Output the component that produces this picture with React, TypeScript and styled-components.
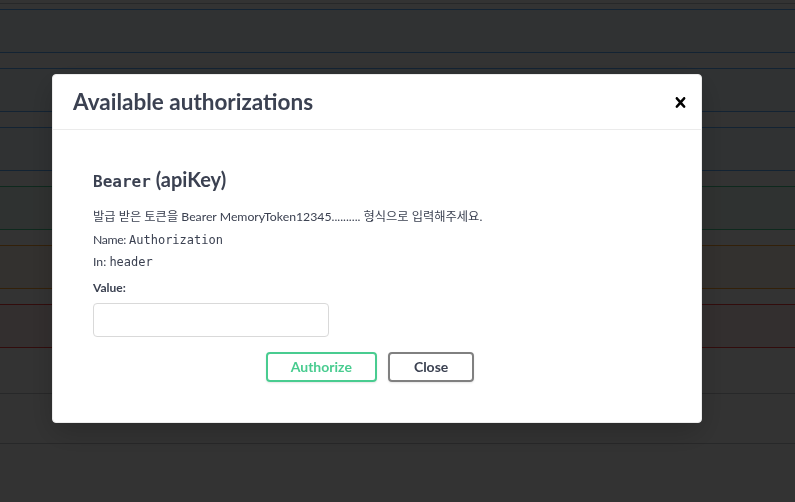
import React from "react";
import styled, { createGlobalStyle } from "styled-components";

const Global = createGlobalStyle`
  html, body { margin: 0; padding: 0; background: #fff; }
  body { font-family: Lato, "Noto Sans CJK KR", sans-serif; color: #3b4151; overflow: hidden; }
  * { box-sizing: border-box; }
`;

const Page = styled.div`
  margin-top: -46px;
  width: 795px;
`;

const TagHeader = styled.div<{ $h: number }>`
  height: ${(p) => p.$h + 1}px;
  border-bottom: 1px solid rgba(59, 65, 81, 0.3);
  margin-bottom: ${(p) => (p.$h > 40 && p.$h < 49.5 ? 5 : p.$h === 49 ? 5 : 0)}px;
`;

const OpList = styled.div`
  display: flex;
  flex-direction: column;
  gap: 15px;
  padding-bottom: 15px;
`;

const methodColors: Record<string, [string, string]> = {
  get: ["#61affe", "rgba(97,175,254,.1)"],
  post: ["#49cc90", "rgba(73,204,144,.1)"],
  put: ["#fca130", "rgba(252,161,48,.1)"],
  delete: ["#f93e3e", "rgba(249,62,62,.1)"],
};

const OpBlock = styled.div<{ $m: string }>`
  height: 44px;
  margin: 0 -6px;
  border: 1px solid ${(p) => methodColors[p.$m][0]};
  background: ${(p) => methodColors[p.$m][1]};
  border-radius: 4px;
`;

const Backdrop = styled.div`
  position: fixed;
  inset: 0;
  background: rgba(0, 0, 0, 0.8);
  display: flex;
  align-items: center;
  justify-content: flex-start;
  padding: 0 0 5px 52px;
`;

const Modal = styled.div`
  width: 650px;
  background: #fff;
  border: 1px solid #ebebeb;
  border-radius: 4px;
  box-shadow: 0 10px 30px 0 rgba(0, 0, 0, 0.2);
`;

const ModalHeader = styled.div`
  display: flex;
  align-items: center;
  justify-content: space-between;
  padding: 12px 10px 12px 20px;
  border-bottom: 1px solid #ebebeb;
`;

const Title = styled.h3`
  margin: 0;
  font-family: Lato, sans-serif;
  font-size: 22.5px;
  line-height: 30px;
  font-weight: 700;
  color: #3b4151;
`;

const CloseIcon = styled.button`
  border: none;
  background: none;
  padding: 0;
  display: flex;
  width: 21px;
  height: 21px;
  svg { fill: #000; }
`;

const ModalBody = styled.div`
  padding: 20px;
`;

const AuthContainer = styled.div`
  padding: 10px 20px;
`;

const SchemeTitle = styled.h4`
  margin: 8px 0 13px;
  font-family: Lato, sans-serif;
  font-size: 20px;
  line-height: 22px;
  font-weight: 700;
  color: #3b4151;
`;

const Code = styled.code<{ $size: number }>`
  font-family: "DejaVu Sans Mono", "Liberation Mono", monospace;
  font-size: ${(p) => p.$size}px;
  font-weight: inherit;
`;

const Para = styled.p<{ $mb: number }>`
  margin: 0 0 ${(p) => p.$mb}px;
  font-family: Lato, "Noto Sans CJK KR", sans-serif;
  font-size: 12.25px;
  line-height: 21px;
  color: #3b4151;
`;

const Key = styled.span`
  letter-spacing: -0.4px;
`;

const Label = styled.label`
  display: block;
  margin-top: 5px;
  font-family: Lato, sans-serif;
  font-size: 12px;
  line-height: 20px;
  font-weight: 700;
  color: #3b4151;
`;

const Input = styled.input`
  display: block;
  margin: 5px 0;
  width: 236px;
  height: 34px;
  padding: 8px 10px;
  border: 1px solid #d9d9d9;
  border-radius: 4px;
  background: #fff;
  font-size: 14px;
  outline: none;
`;

const BtnRow = styled.div`
  display: flex;
  justify-content: center;
  gap: 11px;
  padding: 10px 14px 10px 0;
`;

const Btn = styled.button<{ $variant: "auth" | "close" }>`
  font-family: Lato, sans-serif;
  font-size: 14px;
  font-weight: 700;
  line-height: 16px;
  padding: 5px ${(p) => (p.$variant === "auth" ? 23 : 24)}px;
  border-radius: 4px;
  background: transparent;
  box-shadow: 0 1px 2px rgba(0, 0, 0, 0.1);
  border: 2px solid ${(p) => (p.$variant === "auth" ? "#49cc90" : "#808080")};
  color: ${(p) => (p.$variant === "auth" ? "#49cc90" : "#3b4151")};
`;

const ops = ["get", "get", "get", "post", "put", "delete"];

export default function App() {
  return (
    <>
      <Global />
      <Page>
        <TagHeader $h={49} />
        <OpList>
          {ops.map((m, i) => (
            <OpBlock key={i} $m={m} />
          ))}
        </OpList>
        <TagHeader $h={30} />
        <TagHeader $h={49} />
      </Page>
      <Backdrop>
        <Modal>
          <ModalHeader>
            <Title>Available authorizations</Title>
            <CloseIcon aria-label="Close">
              <svg width="21" height="21" viewBox="0 0 20 20">
                <path d="M14.348 14.849c-.469.469-1.229.469-1.697 0L10 11.819l-2.651 3.029c-.469.469-1.229.469-1.697 0-.469-.469-.469-1.229 0-1.697l2.758-3.15-2.759-3.152c-.469-.469-.469-1.228 0-1.697.469-.469 1.228-.469 1.697 0L10 8.183l2.651-3.031c.469-.469 1.228-.469 1.697 0 .469.469.469 1.229 0 1.697l-2.758 3.152 2.758 3.15c.469.469.469 1.229 0 1.698z" />
              </svg>
            </CloseIcon>
          </ModalHeader>
          <ModalBody>
            <AuthContainer>
              <SchemeTitle>
                <Code $size={16}>Bearer</Code>&nbsp;(apiKey)
              </SchemeTitle>
              <Para $mb={2}>
                발급 받은 토큰을 Bearer MemoryToken12345.......... 형식으로 입력해주세요.
              </Para>
              <Para $mb={0}>
                <Key>Name:</Key> <Code $size={12}>Authorization</Code>
              </Para>
              <Para $mb={0}>
                In: <Code $size={12}>header</Code>
              </Para>
              <Label>Value:</Label>
              <Input type="text" />
              <BtnRow>
                <Btn $variant="auth">Authorize</Btn>
                <Btn $variant="close">Close</Btn>
              </BtnRow>
            </AuthContainer>
          </ModalBody>
        </Modal>
      </Backdrop>
    </>
  );
}
